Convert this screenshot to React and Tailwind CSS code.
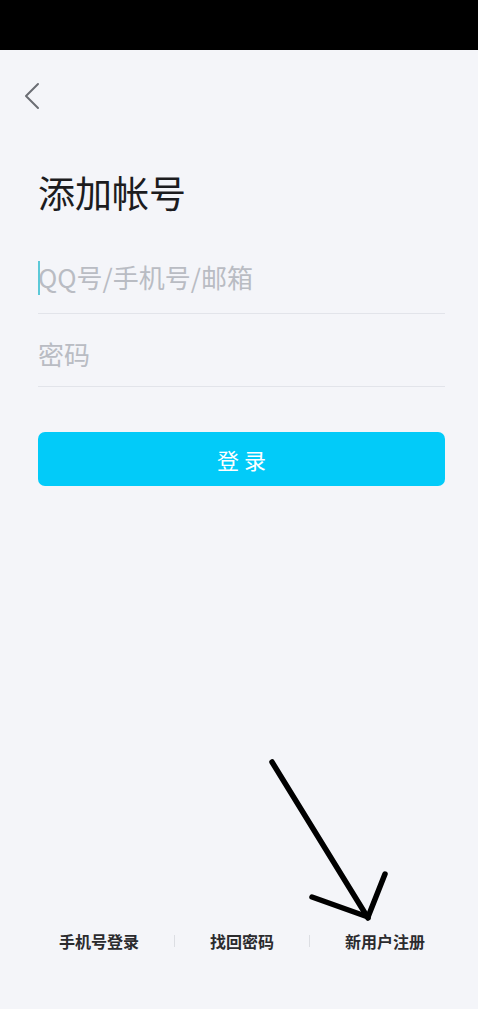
import React from 'react';

const FONT = { fontFamily: '"Noto Sans CJK SC", "Noto Sans", sans-serif' };

function BackIcon() {
  return (
    <svg width="18" height="28" viewBox="0 0 18 28" fill="none">
      <path d="M15 2 L3 14 L15 26" stroke="#6b6e74" strokeWidth="2" strokeLinecap="round" strokeLinejoin="round" />
    </svg>
  );
}

function Arrow() {
  return (
    <svg className="absolute left-0 top-0 pointer-events-none" width="478" height="1017" viewBox="0 0 478 1017" fill="none">
      <path d="M272 762 L368 918" stroke="#000" strokeWidth="5.5" strokeLinecap="round" />
      <path d="M312 897 L368 917 L385 874" stroke="#000" strokeWidth="5.5" strokeLinecap="round" strokeLinejoin="round" />
    </svg>
  );
}

export default function App() {
  return (
    <div className="relative w-[478px] h-[1017px] flex flex-col bg-white overflow-hidden" style={FONT}>
      <div className="h-[50px] bg-black shrink-0" />

      <div className="flex-1 flex flex-col bg-[#f4f5f9]">
        <div className="pt-[32px] pl-[23px]">
          <BackIcon />
        </div>

        <div className="pl-[38px] pr-[33px]">
          <h1 className="mt-[59px] text-[37px] leading-[46px] text-[#1c1c1e] font-normal">添加帐号</h1>

          <div className="mt-[25px] h-[74px] flex items-center border-b border-[#e2e4ea] relative">
            <span className="absolute left-0 top-[21px] w-[2px] h-[34px] bg-[#5cc9d8]" />
            <span className="text-[26px] text-[#b9bcc3]">QQ号/手机号/邮箱</span>
          </div>

          <div className="h-[73px] flex items-center pt-[6px] border-b border-[#e2e4ea]">
            <span className="text-[26px] text-[#b9bcc3]">密码</span>
          </div>

          <button
            type="button"
            className="mt-[45px] w-full h-[54px] rounded-[7px] bg-[#02cbf9] text-white text-[22px] flex items-center justify-center"
          >
            登 录
          </button>
        </div>

        <div className="flex-1" />

        <div className="flex items-center pl-[59px] gap-[35px] mb-[56px] text-[16px] leading-[24px] font-semibold text-[#2b2b2e]">
          <span>手机号登录</span>
          <span className="w-px h-[12px] bg-[#dcdee3]" />
          <span>找回密码</span>
          <span className="w-px h-[12px] bg-[#dcdee3]" />
          <span>新用户注册</span>
        </div>
      </div>

      <div className="h-[8px] bg-white shrink-0" />

      <Arrow />
    </div>
  );
}
